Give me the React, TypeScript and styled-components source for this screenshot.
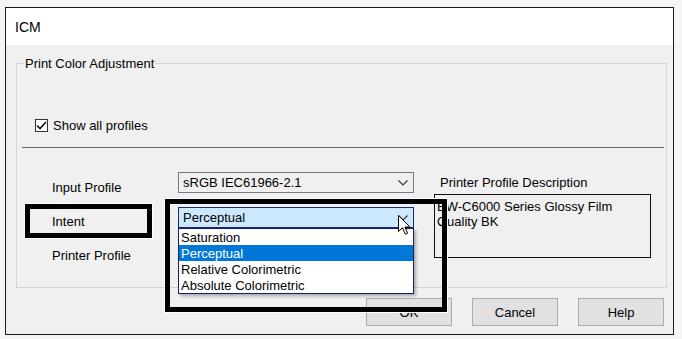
import React from 'react'
import styled, { createGlobalStyle } from 'styled-components'

const GlobalStyle = createGlobalStyle`
  html, body {
    margin: 0;
    padding: 0;
    background: #f5f5f5;
  }
  #root {
    padding: 7px 0 0 5px;
  }
`

const font = `"Liberation Sans", Arial, sans-serif`

const Dialog = styled.div`
  position: relative;
  width: 669px;
  height: 328px;
  box-sizing: border-box;
  border: 1px solid #1a1a1a;
  background: #f0f0f0;
  display: flex;
  flex-direction: column;
  font-family: ${font};
  color: #000;
`

const TitleBar = styled.div`
  height: 37px;
  flex: none;
  background: #fff;
  display: flex;
  align-items: center;
  padding-left: 9px;
  font-size: 14px;
  box-sizing: border-box;
`

const Body = styled.div`
  flex: 1;
  display: flex;
  flex-direction: column;
  padding: 18px 0 0 0;
`

const Group = styled.div`
  position: relative;
  height: 225px;
  box-sizing: border-box;
  margin: 0 6px 0 10px;
  border: 1px solid #d4d4d4;
  display: flex;
  flex-direction: column;
`

const Legend = styled.span`
  position: absolute;
  top: -8px;
  left: 7px;
  padding: 0 1px;
  background: #f0f0f0;
  font-size: 13px;
  line-height: 15px;
`

const CheckRow = styled.label`
  display: flex;
  align-items: center;
  gap: 5px;
  margin: 55px 0 0 18px;
  height: 13px;
  font-size: 13px;
`

const CheckBox = styled.span`
  width: 13px;
  height: 13px;
  box-sizing: border-box;
  border: 1px solid #333;
  background: #fff;
  display: flex;
  align-items: center;
  justify-content: center;
`

const Separator = styled.div`
  margin: 15px 2px 0 5px;
  border-top: 1px solid #6a6a6a;
`

const Form = styled.div`
  display: flex;
  margin: 24px 0 0 35px;
`

const LabelColumn = styled.div`
  width: 126px;
  display: flex;
  flex-direction: column;
`

const FieldLabel = styled.div`
  height: 34px;
  box-sizing: border-box;
  padding-top: 8px;
  font-size: 13px;
  line-height: 15px;
`

const ComboColumn = styled.div`
  width: 236px;
  margin-right: 20px;
  display: flex;
  flex-direction: column;
  gap: 13px;
`

const ComboWrap = styled.div`
  position: relative;
  margin-top: 1px;
`

const Combo = styled.div<{ $active?: boolean }>`
  height: 21px;
  box-sizing: border-box;
  border: 1px solid ${p => (p.$active ? '#1b2a6b' : '#7a7a7a')};
  background: ${p => (p.$active ? '#cce8ff' : '#f0f0f0')};
  display: flex;
  align-items: center;
  justify-content: space-between;
  padding: 0 5px 0 4px;
  font-size: 13px;
`

const DropList = styled.ul`
  position: absolute;
  top: 100%;
  left: 0;
  width: 100%;
  box-sizing: border-box;
  margin: 0;
  padding: 0;
  list-style: none;
  background: #fff;
  border: 1px solid #14206a;
  box-shadow: 2px 2px 3px rgba(0, 0, 0, 0.3);
  z-index: 2;
`

const DropItem = styled.li<{ $selected?: boolean }>`
  height: 16px;
  line-height: 17px;
  padding-left: 2px;
  font-size: 13px;
  background: ${p => (p.$selected ? '#0078d7' : '#fff')};
  color: ${p => (p.$selected ? '#fff' : '#000')};
`

const Description = styled.div`
  width: 217px;
  display: flex;
  flex-direction: column;
`

const DescTitle = styled.div`
  margin-top: 3px;
  padding-left: 6px;
  font-size: 13px;
  line-height: 15px;
`

const DescBox = styled.div`
  margin-top: 4px;
  height: 64px;
  box-sizing: border-box;
  border: 1px solid #111;
  padding: 4px 0 0 2px;
  font-size: 13px;
  line-height: 15px;
`

const ButtonRow = styled.div`
  display: flex;
  justify-content: flex-end;
  gap: 20px;
  margin: 10px 9px 0 0;
`

const Button = styled.button`
  width: 86px;
  height: 28px;
  box-sizing: border-box;
  border: 1px solid #adadad;
  background: #e1e1e1;
  font-family: ${font};
  font-size: 13px;
  color: #000;
  padding: 0;
`

const Highlight = styled.div<{ $x: number; $y: number; $w: number; $h: number }>`
  position: absolute;
  left: ${p => p.$x}px;
  top: ${p => p.$y}px;
  width: ${p => p.$w}px;
  height: ${p => p.$h}px;
  box-sizing: border-box;
  border: 5px solid #000;
  box-shadow: 0 0 0 1px #fff;
  z-index: 3;
  pointer-events: none;
`

const Cursor = styled.svg`
  position: absolute;
  left: 392px;
  top: 207px;
  z-index: 4;
`

const Chevron = () => (
  <svg width="10" height="6" viewBox="0 0 10 6">
    <path d="M0.5 0.5 L5 5 L9.5 0.5" fill="none" stroke="#333" strokeWidth="1.1" />
  </svg>
)

const Check = () => (
  <svg width="11" height="9" viewBox="0 0 11 9">
    <path d="M1 4.5 L4 7.5 L10 1" fill="none" stroke="#111" strokeWidth="1.6" />
  </svg>
)

const intents = ['Saturation', 'Perceptual', 'Relative Colorimetric', 'Absolute Colorimetric']

export default function App() {
  return (
    <>
      <GlobalStyle />
      <Dialog>
        <TitleBar>ICM</TitleBar>
        <Body>
          <Group>
            <Legend>Print Color Adjustment</Legend>
            <CheckRow>
              <CheckBox>
                <Check />
              </CheckBox>
              Show all profiles
            </CheckRow>
            <Separator />
            <Form>
              <LabelColumn>
                <FieldLabel>Input Profile</FieldLabel>
                <FieldLabel>Intent</FieldLabel>
                <FieldLabel>Printer Profile</FieldLabel>
              </LabelColumn>
              <ComboColumn>
                <Combo>
                  <span>sRGB IEC61966-2.1</span>
                  <Chevron />
                </Combo>
                <ComboWrap>
                  <Combo $active>
                    <span>Perceptual</span>
                    <Chevron />
                  </Combo>
                  <DropList>
                    {intents.map(item => (
                      <DropItem key={item} $selected={item === 'Perceptual'}>
                        {item}
                      </DropItem>
                    ))}
                  </DropList>
                </ComboWrap>
                <Combo>
                  <span />
                  <Chevron />
                </Combo>
              </ComboColumn>
              <Description>
                <DescTitle>Printer Profile Description</DescTitle>
                <DescBox>
                  EW-C6000 Series Glossy Film
                  <br />
                  Quality BK
                </DescBox>
              </Description>
            </Form>
          </Group>
          <ButtonRow>
            <Button>OK</Button>
            <Button>Cancel</Button>
            <Button>Help</Button>
          </ButtonRow>
        </Body>
        <Highlight $x={19} $y={196} $w={127} $h={34} />
        <Highlight $x={159} $y={191} $w={282} $h={113} />
        <Cursor width="13" height="21" viewBox="0 0 13 21">
          <path
            d="M0.5 0.5 L0.5 16.5 L4.5 12.8 L7.3 19.2 L9.6 18.2 L6.9 12 L12 12 Z"
            fill="#fff"
            stroke="#000"
            strokeWidth="1"
            strokeLinejoin="miter"
          />
        </Cursor>
      </Dialog>
    </>
  )
}
